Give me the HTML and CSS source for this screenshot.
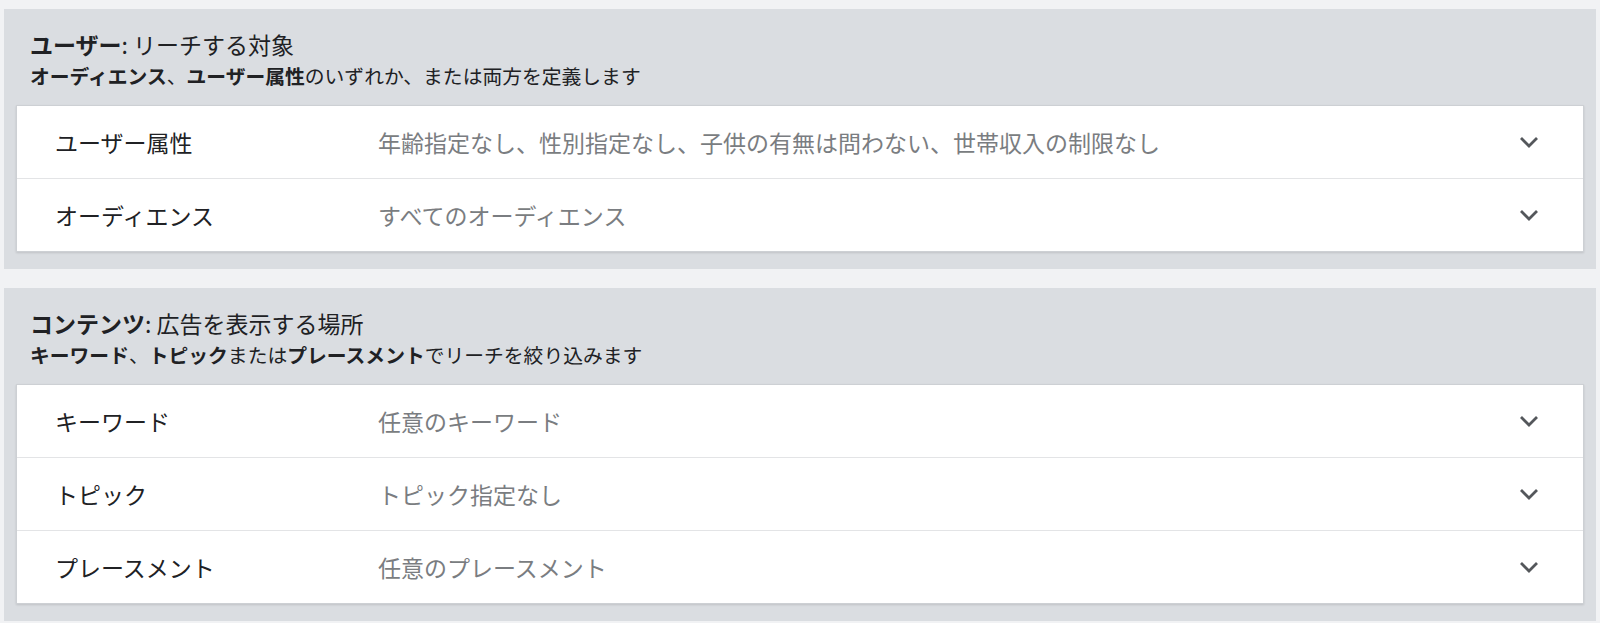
FILE: index.html
```html
<!DOCTYPE html>
<html lang="ja">
<head>
    <meta charset="UTF-8">
    <meta name="viewport" content="width=device-width, initial-scale=1.0">
    <title>ターゲティング</title>
    <link rel="stylesheet" href="styles.css">
</head>
<body>

    <section class="panel">
        <div class="panel-head">
            <h2 class="panel-title"><b>ユーザー</b>: リーチする対象</h2>
            <p class="panel-sub"><b>オーディエンス</b>、<b>ユーザー属性</b>のいずれか、または両方を定義します</p>
        </div>
        <div class="card">
            <div class="row">
                <span class="row-label">ユーザー属性</span>
                <span class="row-value">年齢指定なし、性別指定なし、子供の有無は問わない、世帯収入の制限なし</span>
                <svg class="chevron" width="22" height="14" viewBox="0 0 22 14"><polyline points="3,3 11,11 19,3"/></svg>
            </div>
            <div class="row">
                <span class="row-label">オーディエンス</span>
                <span class="row-value">すべてのオーディエンス</span>
                <svg class="chevron" width="22" height="14" viewBox="0 0 22 14"><polyline points="3,3 11,11 19,3"/></svg>
            </div>
        </div>
    </section>

    <section class="panel">
        <div class="panel-head">
            <h2 class="panel-title"><b>コンテンツ</b>: 広告を表示する場所</h2>
            <p class="panel-sub"><b>キーワード</b>、<b>トピック</b>または<b>プレースメント</b>でリーチを絞り込みます</p>
        </div>
        <div class="card">
            <div class="row">
                <span class="row-label">キーワード</span>
                <span class="row-value">任意のキーワード</span>
                <svg class="chevron" width="22" height="14" viewBox="0 0 22 14"><polyline points="3,3 11,11 19,3"/></svg>
            </div>
            <div class="row">
                <span class="row-label">トピック</span>
                <span class="row-value">トピック指定なし</span>
                <svg class="chevron" width="22" height="14" viewBox="0 0 22 14"><polyline points="3,3 11,11 19,3"/></svg>
            </div>
            <div class="row">
                <span class="row-label">プレースメント</span>
                <span class="row-value">任意のプレースメント</span>
                <svg class="chevron" width="22" height="14" viewBox="0 0 22 14"><polyline points="3,3 11,11 19,3"/></svg>
            </div>
        </div>
    </section>

</body>
</html>
```

FILE: styles.css
```css
body {
    margin: 0;
    padding: 9px 4px 0 4px;
    background-color: #f1f2f4;
    font-family: "Noto Sans CJK JP", "Noto Sans", sans-serif;
    color: #202124;
}

.panel {
    background-color: #dadde1;
    padding: 12px 12px 17px 12px;
    margin-bottom: 19px;
}

.panel-head {
    padding: 8px 14px 15px 14px;
}

.panel-title {
    margin: 0;
    font-size: 23px;
    line-height: 30px;
    font-weight: 400;
}

.panel-title b,
.panel-sub b {
    font-weight: 700;
}

.panel-sub {
    margin: 3px 0 0 0;
    font-size: 19.8px;
    line-height: 28px;
    color: #202124;
}

.card {
    background-color: #fff;
    border: 1px solid #cdd0d4;
    box-shadow: 0px 1px 2px rgba(0, 0, 0, 0.12);
}

.row {
    display: flex;
    align-items: center;
    height: 72px;
    padding: 0 43px 0 38px;
    border-bottom: 1px solid #e3e4e6;
}

.row:last-child {
    border-bottom: none;
}

.row-label {
    width: 323px;
    font-size: 23px;
    color: #202124;
}

.row-value {
    flex: 1;
    font-size: 23px;
    color: #7a7d81;
}

.chevron {
    fill: none;
    stroke: #54575b;
    stroke-width: 2.8;
}
```
